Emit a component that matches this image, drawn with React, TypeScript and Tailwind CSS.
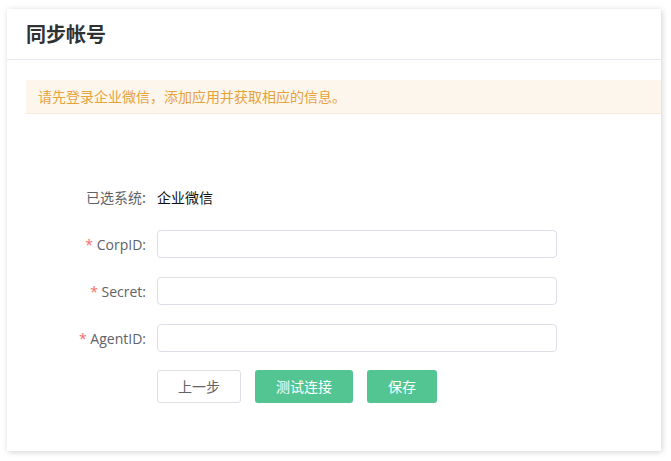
const cjk = { fontFamily: '"Microsoft YaHei", "Noto Sans CJK SC", "Noto Sans", sans-serif' };
const latin = { fontFamily: '"Open Sans", "Noto Sans CJK SC", sans-serif' };

function Field({ label }: { label: string }) {
    return (
        <div className="flex items-center h-[28px]">
            <div className="w-[131px] pr-[11px] text-right text-[14px] text-[#606266]" style={latin}>
                <span className="text-[#f56c6c]">*</span> {label}:
            </div>
            <input className="w-[400px] h-[28px] border border-[#dcdfe6] rounded-[4px] bg-white px-3 text-[14px] outline-none" />
        </div>
    );
}

export default function App() {
    return (
        <div className="w-[671px] h-[461px] bg-white pt-[9px] pl-[7px]" style={cjk}>
            <div className="w-[654px] h-[442px] bg-white shadow-[1px_1px_6px_rgba(0,0,0,0.18)] overflow-hidden">
                {/* Header */}
                <div className="h-[51px] border-b border-[#e4e7ed] flex items-center pl-[19px]">
                    <h1 className="text-[20px] font-bold text-[#303133]">同步帐号</h1>
                </div>

                {/* Alert */}
                <div className="ml-[19px] mt-[20px] h-[34px] bg-[#fdf6ec] border-b border-[#f6ead8] flex items-center pl-[12px] text-[14px] text-[#e6a23c]">
                    请先登录企业微信，添加应用并获取相应的信息。
                </div>

                {/* Form */}
                <div className="pl-[19px] mt-[69px] flex flex-col gap-[19px]">
                    <div className="flex items-center h-[28px]">
                        <div className="w-[131px] pr-[11px] text-right text-[14px] text-[#606266]">已选系统:</div>
                        <div className="text-[14px] text-[#111]">企业微信</div>
                    </div>
                    <Field label="CorpID" />
                    <Field label="Secret" />
                    <Field label="AgentID" />
                    <div className="flex items-center gap-[14px] pl-[131px] -mt-[1px]">
                        <button className="w-[84px] h-[33px] border border-[#dcdfe6] rounded-[3px] bg-white text-[14px] text-[#606266]">上一步</button>
                        <button className="w-[98px] h-[33px] rounded-[3px] bg-[#52c592] text-[14px] text-white">测试连接</button>
                        <button className="w-[70px] h-[33px] rounded-[3px] bg-[#52c592] text-[14px] text-white">保存</button>
                    </div>
                </div>
            </div>
        </div>
    );
}
